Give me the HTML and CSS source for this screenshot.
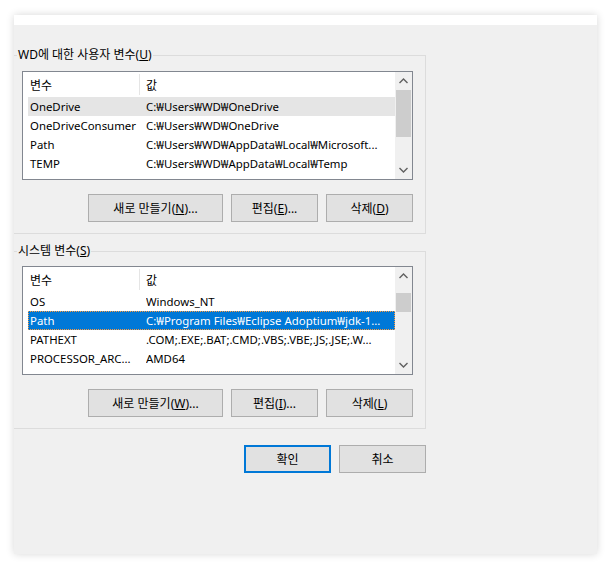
FILE: index.html
```html
<!DOCTYPE html>
<html lang="ko">
<head>
    <meta charset="UTF-8">
    <title>환경 변수</title>
    <link rel="stylesheet" href="styles.css">
</head>
<body>
    <div class="dialog">
        <div class="top-strip"></div>

        <!-- 사용자 변수 -->
        <div class="group group-user">
            <span class="group-label">WD에 대한 사용자 변수(<u>U</u>)</span>
            <div class="list">
                <div class="list-body">
                    <div class="list-head">
                        <div class="col-name">변수</div>
                        <div class="col-value">값</div>
                    </div>
                    <div class="row inactive">
                        <div class="col-name">OneDrive</div>
                        <div class="col-value">C:₩Users₩WD₩OneDrive</div>
                    </div>
                    <div class="row">
                        <div class="col-name">OneDriveConsumer</div>
                        <div class="col-value">C:₩Users₩WD₩OneDrive</div>
                    </div>
                    <div class="row">
                        <div class="col-name">Path</div>
                        <div class="col-value">C:₩Users₩WD₩AppData₩Local₩Microsoft...</div>
                    </div>
                    <div class="row">
                        <div class="col-name">TEMP</div>
                        <div class="col-value">C:₩Users₩WD₩AppData₩Local₩Temp</div>
                    </div>
                </div>
                <div class="scrollbar">
                    <svg class="arrow" width="9" height="6" viewBox="0 0 9 6"><path d="M0.5 5 L4.5 1 L8.5 5" fill="none" stroke="#606060" stroke-width="1.4"/></svg>
                    <div class="track"><div class="thumb thumb-user"></div></div>
                    <svg class="arrow" width="9" height="6" viewBox="0 0 9 6"><path d="M0.5 1 L4.5 5 L8.5 1" fill="none" stroke="#606060" stroke-width="1.4"/></svg>
                </div>
            </div>
            <div class="buttons">
                <button class="btn btn-wide">새로 만들기(<u>N</u>)...</button>
                <button class="btn">편집(<u>E</u>)...</button>
                <button class="btn">삭제(<u>D</u>)</button>
            </div>
        </div>

        <!-- 시스템 변수 -->
        <div class="group group-system">
            <span class="group-label">시스템 변수(<u>S</u>)</span>
            <div class="list">
                <div class="list-body">
                    <div class="list-head">
                        <div class="col-name">변수</div>
                        <div class="col-value">값</div>
                    </div>
                    <div class="row">
                        <div class="col-name">OS</div>
                        <div class="col-value">Windows_NT</div>
                    </div>
                    <div class="row selected">
                        <div class="col-name">Path</div>
                        <div class="col-value">C:₩Program Files₩Eclipse Adoptium₩jdk-1...</div>
                    </div>
                    <div class="row">
                        <div class="col-name">PATHEXT</div>
                        <div class="col-value">.COM;.EXE;.BAT;.CMD;.VBS;.VBE;.JS;.JSE;.W...</div>
                    </div>
                    <div class="row">
                        <div class="col-name">PROCESSOR_ARC...</div>
                        <div class="col-value">AMD64</div>
                    </div>
                </div>
                <div class="scrollbar">
                    <svg class="arrow" width="9" height="6" viewBox="0 0 9 6"><path d="M0.5 5 L4.5 1 L8.5 5" fill="none" stroke="#606060" stroke-width="1.4"/></svg>
                    <div class="track"><div class="thumb thumb-system"></div></div>
                    <svg class="arrow" width="9" height="6" viewBox="0 0 9 6"><path d="M0.5 1 L4.5 5 L8.5 1" fill="none" stroke="#606060" stroke-width="1.4"/></svg>
                </div>
            </div>
            <div class="buttons">
                <button class="btn btn-wide">새로 만들기(<u>W</u>)...</button>
                <button class="btn">편집(<u>I</u>)...</button>
                <button class="btn">삭제(<u>L</u>)</button>
            </div>
        </div>

        <div class="footer">
            <button class="btn btn-default">확인</button>
            <button class="btn">취소</button>
        </div>
    </div>
</body>
</html>
```

FILE: styles.css
```css
/* Global Styles */
body {
    margin: 0;
    padding: 15px 14px 14px 14px;
    background: #ffffff;
    font-family: "Noto Sans", "Noto Sans CJK KR", sans-serif;
    font-size: 12px;
    color: #000;
}

.dialog {
    width: 583px;
    height: 539px;
    background: #f0f0f0;
    box-shadow: 0 0 8px rgba(0, 0, 0, 0.16);
    box-sizing: border-box;
}

.top-strip {
    height: 10px;
    background: #ffffff;
}

u {
    text-decoration: underline;
    text-underline-offset: 1px;
}

/* Group boxes */
.group {
    position: relative;
    width: 412px;
    box-sizing: border-box;
    border: 1px solid #dcdcdc;
    border-left: none;
    padding: 15px 12px 11px 8px;
}

.group-user {
    margin-top: 30px;
    height: 179px;
}

.group-system {
    margin-top: 17px;
    height: 178px;
    padding-top: 14px;
}

.group-label {
    position: absolute;
    top: -9px;
    left: 3px;
    padding: 0 1px;
    background: #f0f0f0;
    line-height: 16px;
    white-space: nowrap;
}

/* List view */
.list {
    display: flex;
    height: 109px;
    box-sizing: border-box;
    border: 1px solid #828790;
    background: #ffffff;
    overflow: hidden;
}

.list-body {
    flex: 1;
    overflow: hidden;
}

.list-head {
    display: flex;
    height: 25px;
}

.list-head .col-name {
    width: 109px;
    padding-left: 7px;
    border-right: 1px solid #e5e5e5;
    margin: 2px 0;
    line-height: 23px;
}

.list-head .col-value {
    padding-left: 6px;
    margin: 2px 0;
    line-height: 23px;
}

.row {
    display: flex;
    height: 19px;
    line-height: 20px;
    margin-left: 5px;
    white-space: nowrap;
    box-sizing: border-box;
    font-size: 11.4px;
}

.row .col-name {
    width: 116px;
    padding-left: 2px;
    overflow: hidden;
}

.row .col-value {
    flex: 1;
    overflow: hidden;
    text-overflow: clip;
}

.row.inactive {
    background: #e5e5e5;
}

.row.selected {
    background: #0078d7;
    color: #ffffff;
    outline: 1px dotted #ff9a3c;
    outline-offset: -1px;
}

/* Scrollbar */
.scrollbar {
    width: 17px;
    display: flex;
    flex-direction: column;
    align-items: center;
    background: #f0f0f0;
}

.arrow {
    margin: 6px 0;
}

.track {
    flex: 1;
    width: 15px;
}

.thumb {
    background: #cdcdcd;
    width: 15px;
}

.thumb-user {
    height: 47px;
}

.thumb-system {
    margin-top: 8px;
    height: 19px;
}

/* Buttons */
.buttons {
    display: flex;
    justify-content: flex-end;
    gap: 8px;
    margin-top: 14px;
}

.btn {
    width: 87px;
    height: 28px;
    box-sizing: border-box;
    border: 1px solid #adadad;
    background: #e1e1e1;
    font-family: "Noto Sans", "Noto Sans CJK KR", sans-serif;
    font-size: 12px;
    color: #000;
    padding: 0;
}

.btn-wide {
    width: 135px;
}

.btn-default {
    border: 2px solid #0078d7;
}

.footer {
    display: flex;
    justify-content: flex-end;
    gap: 8px;
    width: 412px;
    margin-top: 16px;
}
```
